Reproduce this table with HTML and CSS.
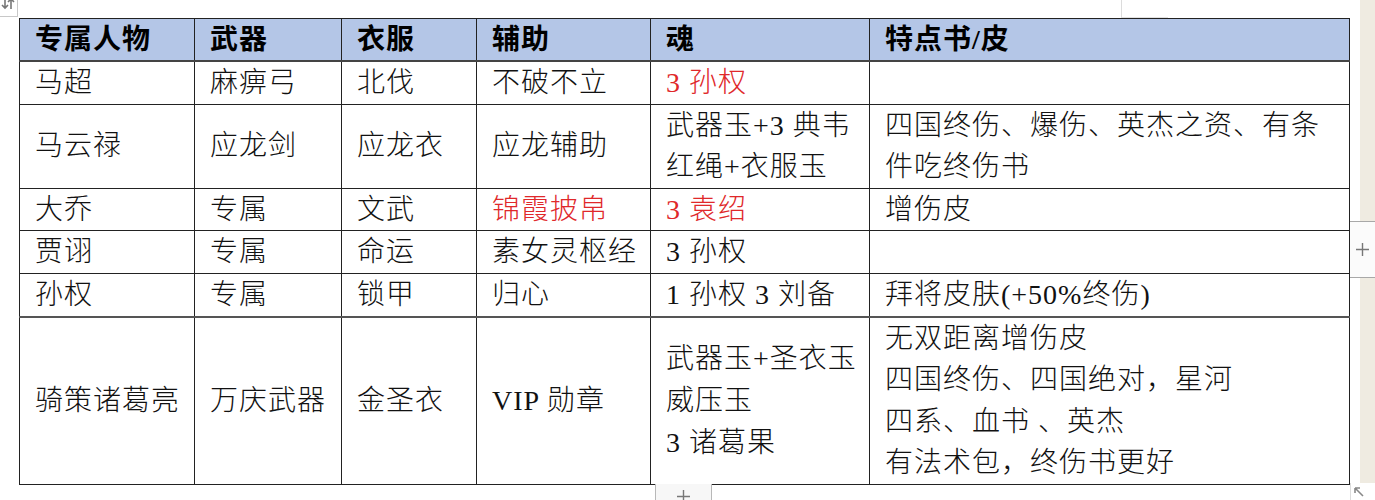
FILE: index.html
```html
<!DOCTYPE html>
<html lang="zh-CN">
<head>
<meta charset="utf-8">
<title>专属人物</title>
<link rel="stylesheet" href="styles.css">
</head>
<body>
<div class="page">
  <table class="grid">
    <colgroup>
      <col class="c1"><col class="c2"><col class="c3"><col class="c4"><col class="c5"><col class="c6">
    </colgroup>
    <thead>
      <tr><th>专属人物</th><th>武器</th><th>衣服</th><th>辅助</th><th>魂</th><th>特点书/皮</th></tr>
    </thead>
    <tbody>
      <tr><td>马超</td><td>麻痹弓</td><td>北伐</td><td>不破不立</td><td class="red">3 孙权</td><td></td></tr>
      <tr><td>马云禄</td><td>应龙剑</td><td>应龙衣</td><td>应龙辅助</td><td>武器玉+3 典韦<br>红绳+衣服玉</td><td>四国终伤、爆伤、英杰之资、有条<br>件吃终伤书</td></tr>
      <tr><td>大乔</td><td>专属</td><td>文武</td><td class="red">锦霞披帛</td><td class="red">3 袁绍</td><td>增伤皮</td></tr>
      <tr><td>贾诩</td><td>专属</td><td>命运</td><td>素女灵枢经</td><td>3 孙权</td><td></td></tr>
      <tr class="pre-last"><td>孙权</td><td>专属</td><td>锁甲</td><td>归心</td><td>1 孙权 3 刘备</td><td>拜将皮肤(+50%终伤)</td></tr>
      <tr><td>骑策诸葛亮</td><td>万庆武器</td><td>金圣衣</td><td>VIP 勋章</td><td>武器玉+圣衣玉<br>威压玉<br>3 诸葛果</td><td>无双距离增伤皮<br>四国终伤、四国绝对，星河<br>四系、血书 、英杰<br>有法术包，终伤书更好</td></tr>
    </tbody>
  </table>
</div>

<div class="handle">
  <svg width="14" height="12" viewBox="0 0 14 12"><path d="M4 0 V10 M1 7 L4 10 L7 7 M10 11 V1 M7 4 L10 1 L13 4" fill="none" stroke="#777" stroke-width="1.6"/></svg>
</div>
<div class="mark"></div>
<div class="strip"></div>
<div class="side-add">
  <svg width="13" height="13" viewBox="0 0 13 13"><path d="M6.5 0 V13 M0 6.5 H13" fill="none" stroke="#777" stroke-width="1.4"/></svg>
</div>
<div class="bottom-add">
  <svg width="13" height="13" viewBox="0 0 13 13"><path d="M6.5 0 V13 M0 6.5 H13" fill="none" stroke="#777" stroke-width="1.4"/></svg>
</div>
<div class="corner-line"></div>
<div class="resize">
  <svg width="10" height="10" viewBox="0 0 10 10"><path d="M1 1 H6 M1 1 V6 M1 1 L9 9" fill="none" stroke="#888" stroke-width="1.6"/></svg>
</div>
</body>
</html>
```

FILE: styles.css
```css
html, body {
  margin: 0;
  padding: 0;
  background: #ffffff;
}

body {
  width: 1375px;
  height: 500px;
  overflow: hidden;
  position: relative;
}

.page {
  padding: 18px 0 0 19px;
}

.grid {
  border-collapse: collapse;
  table-layout: fixed;
  width: 1330px;
  font-family: "Liberation Serif", "Noto Sans CJK SC", serif;
  font-size: 28px;
  letter-spacing: 1px;
  color: #111;
}

.c1 { width: 175px; }
.c2 { width: 147px; }
.c3 { width: 135px; }
.c4 { width: 174px; }
.c5 { width: 219px; }
.c6 { width: 480px; }

.grid th,
.grid td {
  border: 1px solid #222;
  padding: 0 0 0 15px;
  text-align: left;
  vertical-align: middle;
  white-space: nowrap;
}

.grid th {
  background: #b4c6e7;
  font-family: "Liberation Serif", "Noto Sans CJK SC", serif;
  font-weight: 700;
  line-height: 41px;
  border-bottom: 2px solid #444;
  color: #000;
}

.grid td {
  font-weight: 300;
  line-height: 41.6px;
}

.grid .pre-last td {
  border-bottom: 2px solid #555;
}

.grid td.red {
  color: #e0282a;
}

.handle {
  position: absolute;
  left: 0;
  top: 0;
  width: 17px;
  height: 16px;
  border-right: 1px solid #c8c8c8;
  border-bottom: 1px solid #c8c8c8;
  background: #fff;
  overflow: hidden;
}

.handle svg {
  position: absolute;
  left: 1px;
  top: -2px;
}

.mark {
  position: absolute;
  left: 1121px;
  top: 0;
  width: 46px;
  height: 17px;
  border-left: 1px solid #dcdcdc;
  border-bottom: 1px solid #e2e2e2;
}

.strip {
  position: absolute;
  left: 1360px;
  top: 0;
  width: 15px;
  height: 483px;
  background: #efebe1;
}

.side-add {
  position: absolute;
  left: 1350px;
  top: 221px;
  width: 25px;
  height: 55px;
  background: #fbfbfb;
  border-top: 1px solid #a8a8a8;
  border-bottom: 1px solid #a8a8a8;
  display: flex;
  align-items: center;
  justify-content: center;
}

.bottom-add {
  position: absolute;
  left: 655px;
  top: 484px;
  width: 55px;
  height: 16px;
  background: #f7f7f7;
  border-left: 1px solid #b8b8b8;
  border-right: 1px solid #b8b8b8;
  overflow: hidden;
  display: flex;
  justify-content: center;
  align-items: flex-start;
}

.bottom-add svg {
  margin-top: 6px;
}

.corner-line {
  position: absolute;
  left: 1350px;
  top: 483px;
  width: 25px;
  height: 17px;
  border-left: 1px solid #dcdcdc;
}

.resize {
  position: absolute;
  left: 1354px;
  top: 487px;
  width: 10px;
  height: 10px;
}

.resize svg {
  display: block;
}
```
